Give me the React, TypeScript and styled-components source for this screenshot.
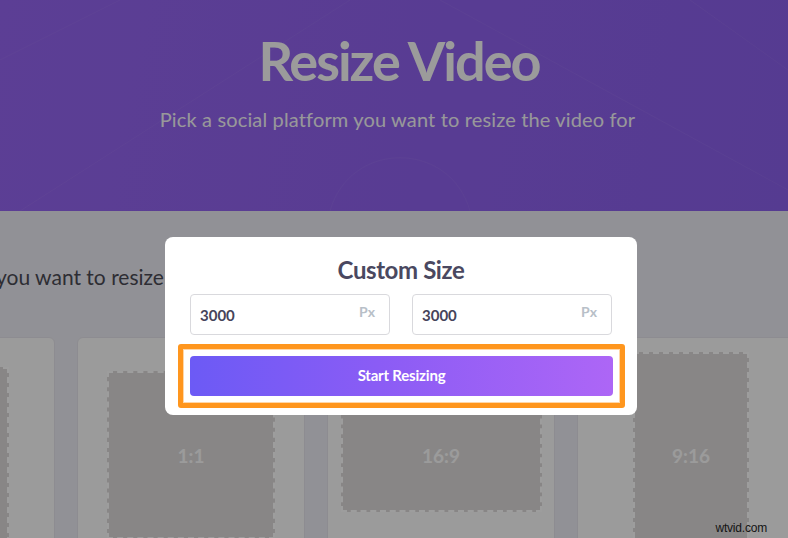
import { createGlobalStyle } from "styled-components";
import styled from "styled-components";

const GlobalStyle = createGlobalStyle`
  * {
    box-sizing: border-box;
  }
  html,
  body {
    margin: 0;
    padding: 0;
    font-family: Lato, "Open Sans", sans-serif;
  }
`;

interface RatioCard {
  label: string;
  width: number;
  height: number;
}

// first card sits mostly off the left edge, its label is never visible
const cards: RatioCard[] = [
  { label: "", width: 136, height: 176 },
  { label: "1:1", width: 168, height: 168 },
  { label: "16:9", width: 201, height: 113 },
  { label: "9:16", width: 116, height: 206 },
];

const App = () => {
  return (
    <Page>
      <GlobalStyle />
      <Hero>
        <HeroLines viewBox="0 0 788 211" preserveAspectRatio="none">
          <path d="M20 211 L350 0" />
          <path d="M440 0 L788 190" />
          <path d="M0 60 L120 0" />
          <path d="M330 211 C350 140, 450 140, 470 211" />
          <path d="M690 0 L788 70" />
        </HeroLines>
        <Title>Resize Video</Title>
        <Subtitle>Pick a social platform you want to resize the video for</Subtitle>
      </Hero>

      <Content>
        <Prompt>you want to resize the video to</Prompt>
        <CardRow>
          {cards.map((card, i) => (
            <Card key={i}>
              <Shape style={{ width: card.width, height: card.height }}>
                {card.label}
              </Shape>
            </Card>
          ))}
        </CardRow>
      </Content>

      <Backdrop>
        <Modal>
          <ModalTitle>Custom Size</ModalTitle>
          <InputRow>
            <SizeField>
              <SizeInput defaultValue="3000" readOnly size={4} />
              <Unit>Px</Unit>
            </SizeField>
            <SizeField>
              <SizeInput defaultValue="3000" readOnly size={4} />
              <Unit>Px</Unit>
            </SizeField>
          </InputRow>
          <Highlight>
            <StartButton>Start Resizing</StartButton>
          </Highlight>
        </Modal>
      </Backdrop>

      <Watermark>wtvid.com</Watermark>
    </Page>
  );
};

const Page = styled.div`
  position: relative;
  width: 100%;
  height: 538px;
  overflow: hidden;
  background: #ebeaf2;
`;

const Hero = styled.header`
  position: relative;
  height: 211px;
  padding-top: 31px;
  display: flex;
  flex-direction: column;
  align-items: center;
  background: linear-gradient(100deg, #9565f0 0%, #8a5feb 100%);
  overflow: hidden;
`;

const HeroLines = styled.svg`
  position: absolute;
  inset: 0;
  width: 100%;
  height: 100%;
  fill: none;
  stroke: rgba(255, 255, 255, 0.05);
  stroke-width: 1;
`;

const Title = styled.h1`
  position: relative;
  margin: 0;
  padding-left: 10px;
  font-family: Lato, sans-serif;
  font-weight: 700;
  font-size: 54px;
  line-height: 60px;
  letter-spacing: -2px;
  color: #fafafa;
`;

const Subtitle = styled.p`
  position: relative;
  margin: 16px 0 0;
  padding-left: 7px;
  font-family: Lato, sans-serif;
  font-size: 20px;
  line-height: 24px;
  letter-spacing: 0.15px;
  color: #f6f6f8;
`;

const Content = styled.main`
  padding-top: 54px;
  display: flex;
  flex-direction: column;
`;

const Prompt = styled.p`
  margin: 0 0 0 -4px;
  font-family: Lato, sans-serif;
  font-size: 21px;
  line-height: 24px;
  color: #4a4a54;
  white-space: nowrap;
`;

const CardRow = styled.div`
  margin: 48px 0 0 -173px;
  display: flex;
  gap: 22px;
`;

const Card = styled.div`
  flex: 0 0 228px;
  height: 236px;
  display: flex;
  align-items: center;
  justify-content: center;
  background: #fafafa;
  border: 1px solid #e4e3ea;
  border-radius: 6px;
`;

const Shape = styled.div`
  display: flex;
  align-items: center;
  justify-content: center;
  background: #dcd9d9;
  border: 2px dashed #fdfdfd;
  font-family: Lato, sans-serif;
  font-weight: 700;
  font-size: 19px;
  color: #fbfbfb;
`;

const Backdrop = styled.div`
  position: absolute;
  inset: 0;
  display: flex;
  justify-content: center;
  align-items: flex-start;
  padding: 237px 0 0 14px;
  background: rgba(0, 0, 0, 0.38);
`;

const Modal = styled.div`
  width: 472px;
  padding: 19px 25px 7px;
  display: flex;
  flex-direction: column;
  background: #ffffff;
  border-radius: 8px;
`;

const ModalTitle = styled.h2`
  margin: 0;
  text-align: center;
  font-family: Lato, sans-serif;
  font-weight: 700;
  font-size: 24px;
  line-height: 28px;
  letter-spacing: -0.4px;
  color: #4a4860;
`;

const InputRow = styled.div`
  margin-top: 10px;
  display: grid;
  grid-template-columns: minmax(0, 1fr) minmax(0, 1fr);
  gap: 22px;
`;

const SizeField = styled.label`
  min-width: 0;
  height: 41px;
  padding: 0 14px 0 9px;
  display: flex;
  align-items: center;
  border: 1px solid #d9d9dd;
  border-radius: 4px;
  background: #ffffff;
`;

const SizeInput = styled.input`
  flex: 1;
  width: 0;
  min-width: 0;
  border: none;
  outline: none;
  padding: 0;
  background: transparent;
  font-family: Lato, sans-serif;
  font-weight: 700;
  font-size: 15px;
  color: #46445a;
`;

const Unit = styled.span`
  padding-bottom: 6px;
  font-family: Lato, sans-serif;
  font-weight: 700;
  font-size: 14px;
  color: #b8c0c8;
`;

const Highlight = styled.div`
  margin: 9px -13px 0 -12px;
  padding: 7px;
  border: 5px solid #ff961e;
  border-radius: 3px;
  box-shadow: inset 0 0 0 1px #ffd7a8;
`;

const StartButton = styled.button`
  display: block;
  width: 100%;
  height: 40px;
  padding: 0 0 2px;
  border: none;
  border-radius: 4px;
  background: linear-gradient(90deg, #6c5af5 0%, #8b5cf5 45%, #ad66f6 100%);
  font-family: Lato, sans-serif;
  font-weight: 700;
  font-size: 15px;
  letter-spacing: -0.2px;
  color: #ffffff;
  cursor: pointer;
`;

const Watermark = styled.span`
  position: absolute;
  right: 21px;
  bottom: 3px;
  font-family: "Liberation Sans", Arial, sans-serif;
  font-size: 12px;
  letter-spacing: -0.2px;
  color: #141414;
`;

export default App;
